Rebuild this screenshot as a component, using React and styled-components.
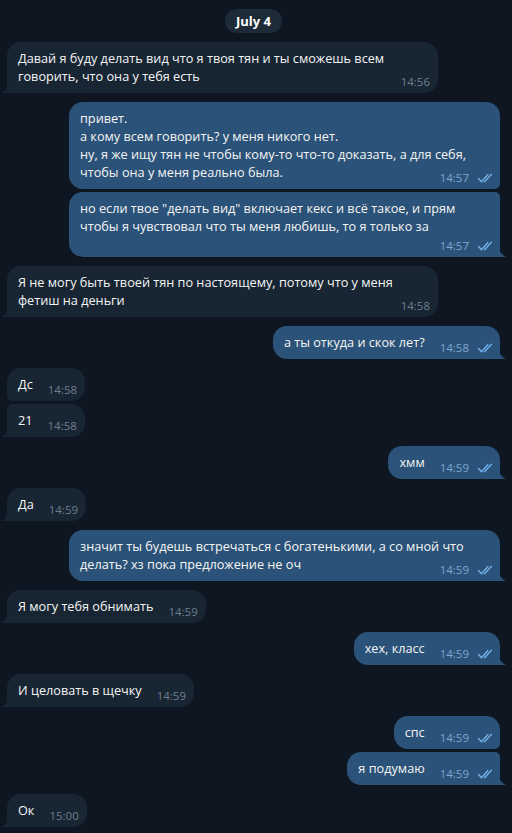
import React from "react";
import styled, { createGlobalStyle, css } from "styled-components";

const Global = createGlobalStyle`
  html, body { margin: 0; padding: 0; background: #0e1621; }
  body { font-family: "Open Sans", "Noto Sans", "DejaVu Sans", sans-serif; -webkit-font-smoothing: antialiased; }
  #root { min-height: 833px; }
`;

const Chat = styled.div`
  display: flex;
  flex-direction: column;
  gap: 9px;
  padding: 9px 12px 0 7px;
  min-height: 833px;
  box-sizing: border-box;
  background: #0e1621;
`;

const DatePill = styled.div`
  align-self: center;
  height: 24px;
  padding: 0 11px;
  border-radius: 12px;
  background: #1d2a38;
  color: #ffffff;
  font-size: 13px;
  font-weight: 700;
  line-height: 24px;
`;

const Group = styled.div`
  display: flex;
  flex-direction: column;
  gap: 3px;
  align-items: ${(p) => (p.$out ? "flex-end" : "flex-start")};
`;

const R = 14;
const r = 5;

const Bubble = styled.div`
  position: relative;
  max-width: 431px;
  box-sizing: border-box;
  padding: 7px 11px 8px;
  background: ${(p) => (p.$out ? "#2b5278" : "#182533")};
  color: #f5f5f5;
  ${(p) => {
    const first = p.$pos === "first" || p.$pos === "single";
    const last = p.$pos === "last" || p.$pos === "single";
    const inTop = first ? R : r;
    const inBottom = last ? 0 : r;
    return p.$out
      ? css`border-radius: ${R}px ${inTop}px ${inBottom}px ${R}px;`
      : css`border-radius: ${inTop}px ${R}px ${R}px ${inBottom}px;`;
  }}
`;

const Body = styled.div`
  font-size: 12.7px;
  line-height: 14px;
  white-space: pre-wrap;
  word-wrap: break-word;
`;

const Words = styled.span`
  line-height: 18px;
`;

const Spacer = styled.span`
  display: inline-block;
  width: ${(p) => (p.$out ? 61 : 38)}px;
  height: 12px;
`;

const Meta = styled.span`
  position: absolute;
  right: ${(p) => (p.$out ? 5 : 8)}px;
  bottom: 4px;
  display: flex;
  align-items: center;
  height: 14px;
  font-size: 11.5px;
  line-height: 14px;
  color: ${(p) => (p.$out ? "#7da8d3" : "#6d7f8f")};
`;

const Checks = styled.svg`
  margin-left: 8px;
  width: 18px;
  height: 10px;
  color: #74b4ee;
`;

const TailSvg = styled.svg`
  position: absolute;
  bottom: 0;
  width: 7px;
  height: 11px;
  ${(p) => (p.$out ? css`right: -6px;` : css`left: -6px;`)}
`;

function Tail({ out }) {
  return (
    <TailSvg $out={out} viewBox="0 0 7 11">
      <path
        d={out ? "M0 0 C0 5 2.5 9 7 11 L0 11 Z" : "M7 0 C7 5 4.5 9 0 11 L7 11 Z"}
        fill={out ? "#2b5278" : "#182533"}
      />
    </TailSvg>
  );
}

function Message({ out, pos = "single", time, children }) {
  const tail = pos === "single" || pos === "last";
  return (
    <Bubble $out={out} $pos={pos}>
      <Body>
        <Words>{children}</Words> <Spacer $out={out} />
      </Body>
      <Meta $out={out}>
        {time}
        {out && (
          <Checks viewBox="0 0 18 10" fill="none" stroke="currentColor" strokeWidth="1.3" strokeLinecap="round" strokeLinejoin="round">
            <path d="M1.5 5.5 L4.5 8.7 L11 1.5" />
            <path d="M7.5 8.7 L14.5 1.2" />
          </Checks>
        )}
      </Meta>
      {tail && <Tail out={out} />}
    </Bubble>
  );
}

const groups = [
  { out: false, items: [["Давай я буду делать вид что я твоя тян и ты сможешь всем говорить, что она у тебя есть", "14:56"]] },
  {
    out: true,
    items: [
      ["привет.\nа кому всем говорить? у меня никого нет.\nну, я же ищу тян не чтобы кому-то что-то доказать, а для себя, чтобы она у меня реально была.", "14:57"],
      ["но если твое \"делать вид\" включает кекс и всё такое, и прям\nчтобы я чувствовал что ты меня любишь, то я только за", "14:57"],
    ],
  },
  { out: false, items: [["Я не могу быть твоей тян по настоящему, потому что у меня фетиш на деньги", "14:58"]] },
  { out: true, items: [["а ты откуда и скок лет?", "14:58"]] },
  { out: false, items: [["Дс", "14:58"], ["21", "14:58"]] },
  { out: true, items: [["хмм", "14:59"]] },
  { out: false, items: [["Да", "14:59"]] },
  { out: true, items: [["значит ты будешь встречаться с богатенькими, а со мной что делать? хз пока предложение не оч", "14:59"]] },
  { out: false, items: [["Я могу тебя обнимать", "14:59"]] },
  { out: true, items: [["хех, класс", "14:59"]] },
  { out: false, items: [["И целовать в щечку", "14:59"]] },
  { out: true, items: [["спс", "14:59"], ["я подумаю", "14:59"]] },
  { out: false, items: [["Ок", "15:00"]] },
];

function posOf(i, n) {
  if (n === 1) return "single";
  if (i === 0) return "first";
  if (i === n - 1) return "last";
  return "middle";
}

export default function App() {
  return (
    <>
      <Global />
      <Chat>
        <DatePill>July 4</DatePill>
        {groups.map((g, gi) => (
          <Group key={gi} $out={g.out}>
            {g.items.map(([text, time], i) => (
              <Message key={i} out={g.out} pos={posOf(i, g.items.length)} time={time}>
                {text}
              </Message>
            ))}
          </Group>
        ))}
      </Chat>
    </>
  );
}
